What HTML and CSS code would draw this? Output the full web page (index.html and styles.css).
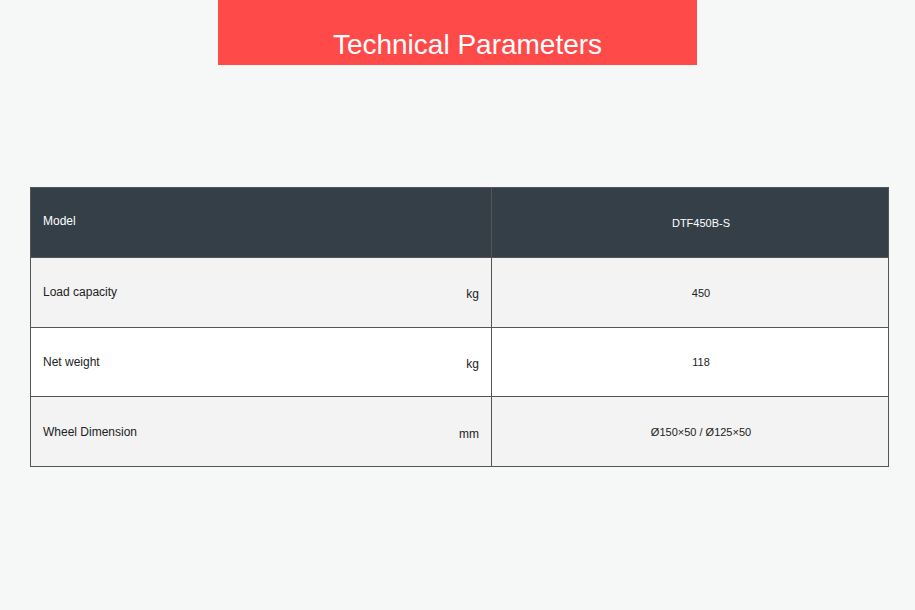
FILE: index.html
```html
<!DOCTYPE html>
<html>
<head>
<meta charset="utf-8">
<link rel="stylesheet" href="styles.css">
</head>
<body>
<div class="banner"><h1 class="title">Technical Parameters</h1></div>
<table class="params">
  <tr class="head">
    <td class="label"><div class="lab"><span>Model</span></div></td>
    <td class="val">DTF450B-S</td>
  </tr>
  <tr class="grey">
    <td class="label"><div class="lab"><span>Load capacity</span><span class="unit">kg</span></div></td>
    <td class="val">450</td>
  </tr>
  <tr class="white">
    <td class="label"><div class="lab"><span>Net weight</span><span class="unit">kg</span></div></td>
    <td class="val">118</td>
  </tr>
  <tr class="grey">
    <td class="label"><div class="lab"><span>Wheel Dimension</span><span class="unit">mm</span></div></td>
    <td class="val">Ø150×50 / Ø125×50</td>
  </tr>
</table>
</body>
</html>
```
FILE: styles.css
```css
html, body {
  margin: 0;
  padding: 0;
  background: #f6f7f7;
  font-family: "Liberation Sans", Arial, sans-serif;
}
.banner {
  width: 479px;
  height: 65px;
  margin: 0 auto;
  background: #ff4a4a;
  box-sizing: border-box;
  padding: 29px 0 0 20px;
}
.title {
  margin: 0;
  font-weight: normal;
  font-size: 28px;
  line-height: 32px;
  color: #fff;
  text-align: center;
}
.params {
  margin: 122px 0 0 30px;
  width: 859px;
  border-collapse: collapse;
  border: 1px solid #3a3a3a;
  table-layout: fixed;
}
.params td {
  border: 1px solid #555;
  padding: 0;
  height: 67.75px;
  font-size: 12px;
  color: #222;
}
.params td.label {
  width: 436px;
  padding: 0 12px;
}
.lab {
  display: flex;
  justify-content: space-between;
  align-items: center;
}
.unit {
  position: relative;
  top: 2px;
  font-size: 12px;
}
.params td.val {
  text-align: center;
  padding-left: 22px;
  font-size: 11px;
  padding-top: 1px;
}
.head td {
  background: #353f48;
  color: #fff;
}
.head .lab {
  position: relative;
  top: -1px;
}
.grey td {
  background: #f3f3f3;
}
.white td {
  background: #fff;
}
```
